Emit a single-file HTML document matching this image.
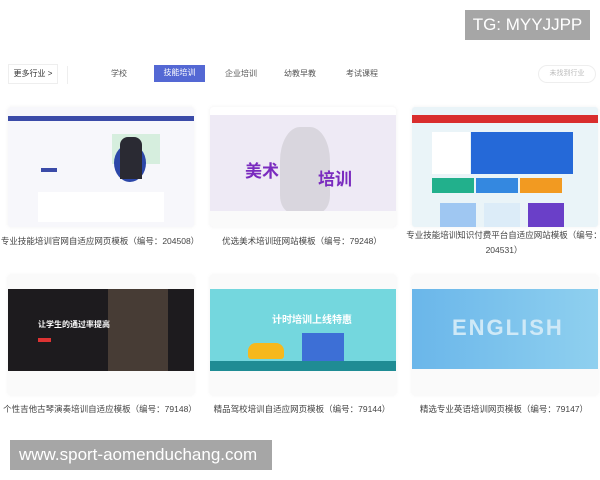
<!DOCTYPE html>
<html><head><meta charset="utf-8"><style>
*{margin:0;padding:0;box-sizing:border-box}
body{width:600px;height:480px;background:#fff;position:relative;overflow:hidden;font-family:"Liberation Sans","Noto Sans CJK SC",sans-serif}
.abs{position:absolute}
.tg{left:465px;top:10px;width:125px;height:30px;background:#a6a6a6;color:#fff;font-size:17px;line-height:30px;text-align:center}
.url{left:10px;top:440px;width:262px;height:30px;background:#a6a6a6;color:#fff;font-size:17px;line-height:30px;padding-left:9px}
.nav{font-size:8px;color:#555;top:66px;line-height:16px}
.card{position:absolute;width:186px;height:120px;background:#f3f3f6;border-radius:3px;overflow:hidden;box-shadow:0 0 4px rgba(0,0,0,.06)}
.cap{position:absolute;font-size:8.5px;color:#444;text-align:center;width:200px;line-height:15px}
</style></head><body>
<div class="abs tg">TG: MYYJJPP</div>
<div class="abs nav" style="left:8px;top:64px;width:50px;height:20px;border:1px solid #eee;line-height:18px;text-align:center;color:#333">更多行业 &gt;</div>
<div class="abs" style="left:67px;top:66px;width:1px;height:18px;background:#eee"></div>
<div class="abs nav" style="left:111px">学校</div>
<div class="abs nav" style="left:154px;top:65px;width:51px;height:17px;background:#5468d4;color:#fff;text-align:center">技能培训</div>
<div class="abs nav" style="left:225px">企业培训</div>
<div class="abs nav" style="left:284px">幼教早教</div>
<div class="abs nav" style="left:346px">考试课程</div>
<div class="abs nav" style="left:538px;top:65px;width:58px;height:18px;border:1px solid #eee;border-radius:9px;text-align:center;color:#bbb;font-size:7px">未找到行业</div>

<!-- row1 -->
<div class="card" style="left:8px;top:107px;background:#f7f7fb">
 <div style="height:5px;background:#3b4ba8;margin-top:9px"></div>
 <div style="position:absolute;left:104px;top:27px;width:48px;height:30px;background:#d6eede"></div>
 <div style="position:absolute;left:106px;top:37px;width:32px;height:38px;border-radius:50%;background:#2c47a8"></div>
 <div style="position:absolute;left:112px;top:30px;width:22px;height:42px;background:#2a2a33;border-radius:8px 8px 0 0"></div>
 <div style="position:absolute;left:33px;top:61px;width:16px;height:4px;background:#3b4ba8"></div>
 <div style="position:absolute;left:30px;top:85px;width:126px;height:30px;background:#fff"></div>
</div>
<div class="card" style="left:210px;top:107px;background:#eeeaf5">
 <div style="height:8px;background:#fff"></div>
 <div style="position:absolute;left:70px;top:20px;width:50px;height:85px;background:#d9d6de;border-radius:40% 40% 20% 20%"></div>
 <div style="position:absolute;left:35px;top:50px;color:#7a2bbf;font-size:17px;font-weight:bold">美术</div>
 <div style="position:absolute;left:108px;top:58px;color:#7a2bbf;font-size:17px;font-weight:bold">培训</div>
 <div style="position:absolute;left:0;top:104px;width:186px;height:16px;background:#fafafa"></div>
</div>
<div class="card" style="left:412px;top:107px;background:#eaf4f8">
 <div style="height:8px;background:#d92d2d;margin-top:8px"></div>
 <div style="position:absolute;left:59px;top:25px;width:102px;height:42px;background:#2569d8"></div>
 <div style="position:absolute;left:20px;top:25px;width:38px;height:42px;background:#fff"></div>
 <div style="position:absolute;left:20px;top:71px;width:42px;height:15px;background:#22b08c"></div>
 <div style="position:absolute;left:64px;top:71px;width:42px;height:15px;background:#3488e0"></div>
 <div style="position:absolute;left:108px;top:71px;width:42px;height:15px;background:#f29a21"></div>
 <div style="position:absolute;left:28px;top:96px;width:36px;height:24px;background:#9fc7f2"></div>
 <div style="position:absolute;left:72px;top:96px;width:36px;height:24px;background:#dcecf8"></div>
 <div style="position:absolute;left:116px;top:96px;width:36px;height:24px;background:#6a3fc8"></div>
</div>
<div class="cap" style="left:0;top:234px">专业技能培训官网自适应网页模板（编号：204508）</div>
<div class="cap" style="left:202px;top:234px">优选美术培训班网站模板（编号：79248）</div>
<div class="cap" style="left:404px;top:228px">专业技能培训知识付费平台自适应网站模板（编号：204531）</div>

<!-- row2 -->
<div class="card" style="left:8px;top:275px;background:#fafafa">
 <div style="position:absolute;left:0;top:14px;width:186px;height:82px;background:#1d1b1e"></div>
 <div style="position:absolute;left:100px;top:14px;width:60px;height:82px;background:#5a4a3e;opacity:.7"></div>
 <div style="position:absolute;left:30px;top:44px;color:#fff;font-size:8px;font-weight:bold">让学生的通过率提高</div>
 <div style="position:absolute;left:30px;top:63px;width:13px;height:4px;background:#d33"></div>
</div>
<div class="card" style="left:210px;top:275px;background:#fafafa">
 <div style="position:absolute;left:0;top:14px;width:186px;height:82px;background:#74d7de"></div>
 <div style="position:absolute;left:0;top:86px;width:186px;height:10px;background:#1f8c94"></div>
 <div style="position:absolute;left:38px;top:68px;width:36px;height:16px;background:#f6b81c;border-radius:8px 8px 3px 3px"></div>
 <div style="position:absolute;left:92px;top:58px;width:42px;height:28px;background:#3d6fd6"></div>
 <div style="position:absolute;left:62px;top:36px;color:#fff;font-size:10px;font-weight:bold">计时培训上线特惠</div>
</div>
<div class="card" style="left:412px;top:275px;background:#fafafa">
 <div style="position:absolute;left:0;top:14px;width:186px;height:80px;background:linear-gradient(90deg,#6ab6ea,#8fd0ef)"></div>
 <div style="position:absolute;left:40px;top:40px;color:#cfe9f7;font-size:22px;font-weight:bold;letter-spacing:2px">ENGLISH</div>
</div>
<div class="cap" style="left:0;top:402px">个性吉他古琴演奏培训自适应模板（编号：79148）</div>
<div class="cap" style="left:202px;top:402px">精品驾校培训自适应网页模板（编号：79144）</div>
<div class="cap" style="left:404px;top:402px">精选专业英语培训网页模板（编号：79147）</div>

<div class="abs url">www.sport-aomenduchang.com</div>
</body></html>
